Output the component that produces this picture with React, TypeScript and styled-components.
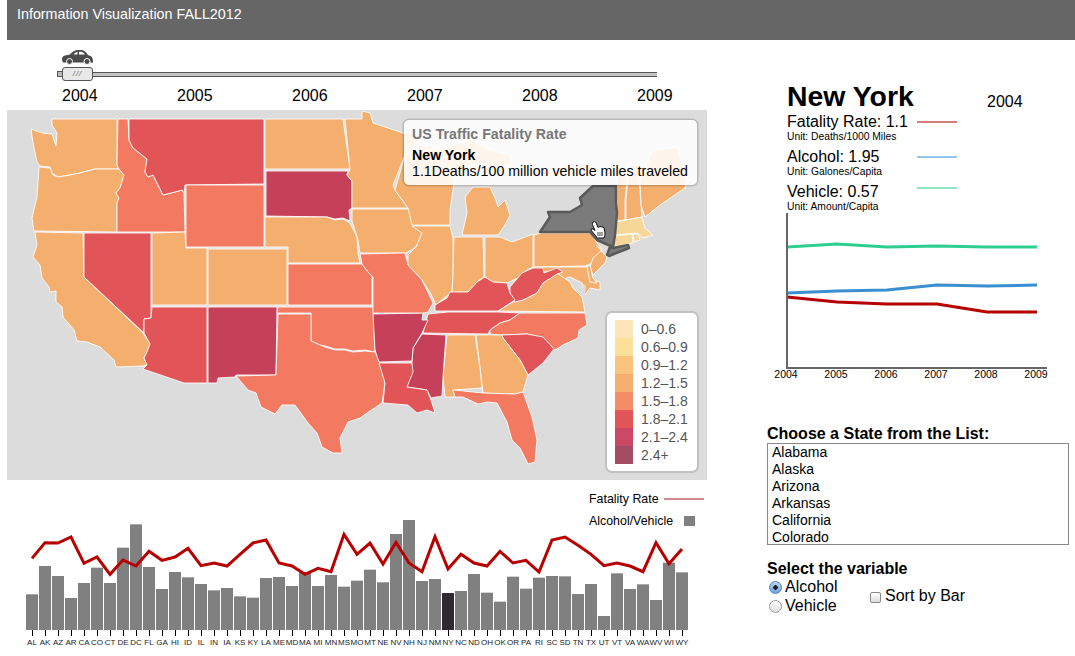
import React from 'react';
import styled, { createGlobalStyle } from 'styled-components';

const ORANGE = '#f4ae6e';
const SALMON = '#f37a60';
const RED = '#e15558';
const CRIMSON = '#c7405a';
const PALE = '#f7d798';

// screen coordinates, the svg viewBox starts at the map's corner
const STATES: { id: string; fill: string; points: string }[] = [
  { id: 'WA', fill: ORANGE, points: '52,119 117,119 117,165 119,169 95,169 80,173 70,175 58,177 52,173 50,167 40,166 37,162 33,143 31,129 42,133 52,134 56,146 57,133 52,125' },
  { id: 'OR', fill: ORANGE, points: '39,167 50,168 53,175 58,177 70,175 80,173 95,169 119,169 124,175 120,188 116,193 119,198 117,203 117,232 34,231 32,218 37,197' },
  { id: 'CA', fill: ORANGE, points: '36,232 83,233 84,277 143,333 150,344 147,352 144,358 147,365 143,366 116,367 114,360 100,347 87,342 77,341 74,330 63,317 62,307 56,302 56,291 50,292 49,287 42,278 40,265 33,257 37,245 35,233' },
  { id: 'NV', fill: RED, points: '84,233 151,233 151,318 144,319 144,333 84,277' },
  { id: 'ID', fill: SALMON, points: '118,119 128,119 129,140 133,148 147,159 145,172 148,177 153,175 163,195 175,192 182,190 184,193 185,232 117,232 117,203 119,198 116,193 120,188 124,175 119,169 117,165' },
  { id: 'MT', fill: RED, points: '129,119 264,119 264,184 185,185 184,193 182,190 175,192 163,195 153,175 148,177 145,172 147,159 133,148 129,140' },
  { id: 'WY', fill: SALMON, points: '186,185 264,185 264,247 186,247' },
  { id: 'UT', fill: ORANGE, points: '152,233 185,232 186,248 207,248 207,305 152,305' },
  { id: 'CO', fill: ORANGE, points: '208,249 287,249 287,305 208,305' },
  { id: 'AZ', fill: RED, points: '152,307 207,307 207,383 184,383 143,369 147,365 144,358 147,352 150,344 144,333 144,319 151,318' },
  { id: 'NM', fill: CRIMSON, points: '208,307 277,307 276,375 236,375 235,377 218,378 217,383 208,383' },
  { id: 'ND', fill: ORANGE, points: '265,119 343,119 350,169 265,169' },
  { id: 'SD', fill: CRIMSON, points: '266,171 348,171 347,175 352,181 352,208 349,210 350,221 343,218 335,219 327,217 266,216' },
  { id: 'NE', fill: ORANGE, points: '265,217 327,217 335,220 343,219 350,223 357,237 358,253 360,263 288,263 288,247 265,247' },
  { id: 'KS', fill: SALMON, points: '288,264 362,264 368,272 372,276 372,305 288,305' },
  { id: 'OK', fill: SALMON, points: '278,307 373,307 375,352 365,350 353,351 345,349 335,349 325,346 314,344 311,340 311,313 277,313' },
  { id: 'TX', fill: SALMON, points: '278,314 311,314 311,341 325,347 335,350 345,350 353,352 365,351 375,352 380,362 385,383 382,403 367,413 360,418 348,422 340,438 342,453 333,453 322,447 317,433 308,423 295,405 282,405 275,414 261,407 256,393 248,390 236,376 276,375' },
  { id: 'MN', fill: ORANGE, points: '345,119 362,119 362,111 370,113 373,123 403,133 425,135 405,155 393,185 395,190 408,208 352,208 352,181 347,175 350,169' },
  { id: 'IA', fill: ORANGE, points: '352,209 410,209 413,222 422,233 416,247 406,253 360,253 358,240 352,221' },
  { id: 'WI', fill: ORANGE, points: '395,190 405,155 430,145 448,160 456,165 453,190 450,210 450,225 412,225 408,208' },
  { id: 'MU', fill: ORANGE, points: '425,150 445,148 470,140 490,150 510,155 510,165 470,165 450,175' },
  { id: 'IL', fill: ORANGE, points: '412,226 450,226 453,238 453,275 452,292 444,298 436,305 431,294 422,280 408,265 408,255 416,247 422,233' },
  { id: 'IN', fill: ORANGE, points: '454,237 483,237 484,277 478,281 473,287 468,292 460,292 452,293 453,275' },
  { id: 'OH', fill: ORANGE, points: '485,237 500,237 512,242 533,234 533,267 527,270 520,277 507,283 493,282 485,277' },
  { id: 'MI', fill: ORANGE, points: '462,235 467,213 465,197 473,187 490,187 496,200 498,207 505,200 510,215 505,225 498,235' },
  { id: 'PA', fill: ORANGE, points: '534,235 541,233 591,233 597,243 602,249 600,255 595,262 585,266 534,267' },
  { id: 'VT', fill: ORANGE, points: '617,170 628,170 625,200 625,220 617,221 617,203' },
  { id: 'NH', fill: ORANGE, points: '629,165 638,165 642,217 626,220 626,200' },
  { id: 'ME', fill: ORANGE, points: '653,150 677,147 687,175 685,188 660,205 645,217 641,205 640,180' },
  { id: 'MA', fill: PALE, points: '615,222 642,217 645,228 653,235 643,238 637,233 614,235' },
  { id: 'CT', fill: PALE, points: '614,236 632,234 633,243 612,247' },
  { id: 'RI', fill: PALE, points: '633,234 638,234 640,240 634,242' },
  { id: 'NJ', fill: ORANGE, points: '596,245 607,257 605,263 593,275 590,267 593,258 602,250' },
  { id: 'MD', fill: ORANGE, points: '533,267 587,267 592,280 600,282 600,290 590,288 585,295 582,283 570,277 560,280 552,272 540,272 533,276' },
  { id: 'DE', fill: ORANGE, points: '587,267 590,265 593,278 597,283 590,282' },
  { id: 'VA', fill: ORANGE, points: '498,311 513,302 523,300 537,293 543,283 557,273 570,282 573,288 582,297 584,307 585,312' },
  { id: 'WV', fill: RED, points: '510,287 522,273 533,268 543,268 544,273 557,268 563,272 557,274 543,283 537,293 523,300 515,302 510,293' },
  { id: 'KY', fill: RED, points: '435,305 447,298 450,292 468,292 477,282 485,277 493,282 507,283 510,293 515,300 498,311 435,311' },
  { id: 'TN', fill: RED, points: '428,314 448,312 498,312 520,313 510,320 500,323 490,330 488,334 423,333' },
  { id: 'NC', fill: SALMON, points: '520,313 585,313 587,325 579,330 578,338 563,345 555,350 543,338 527,334 500,335 490,334 490,330 500,323 510,320' },
  { id: 'SC', fill: RED, points: '502,335 527,334 543,337 554,349 543,363 528,375 520,360 503,338' },
  { id: 'GA', fill: ORANGE, points: '476,335 502,335 503,338 520,360 528,375 523,392 515,394 483,393 480,368' },
  { id: 'AL', fill: ORANGE, points: '447,335 475,335 480,368 482,388 453,390 455,397 445,397 443,377' },
  { id: 'MS', fill: CRIMSON, points: '422,334 446,335 443,377 442,396 431,398 427,390 407,387 412,362 413,348' },
  { id: 'AR', fill: CRIMSON, points: '373,314 423,313 422,320 428,320 422,333 413,348 412,361 379,362 375,350' },
  { id: 'LA', fill: RED, points: '379,363 412,363 413,372 407,387 427,390 431,400 435,413 427,410 417,413 408,405 383,403 385,383' },
  { id: 'FL', fill: SALMON, points: '453,390 483,393 515,394 523,392 532,417 537,440 535,462 528,464 520,448 512,440 507,422 497,403 487,402 478,404 463,397 455,397' },
  { id: 'MO', fill: SALMON, points: '360,254 405,253 408,265 422,280 433,303 428,312 423,313 373,313 373,277 368,272 362,264' },
];

const LEGEND = [
  ['#fee5b7', '0–0.6'],
  ['#fde09a', '0.6–0.9'],
  ['#fcc37e', '0.9–1.2'],
  ['#f4ae6e', '1.2–1.5'],
  ['#f28b66', '1.5–1.8'],
  ['#e15558', '1.8–2.1'],
  ['#cb4866', '2.1–2.4'],
  ['#a44c65', '2.4+'],
];

// top of the bar and point on the line, in 3x zoom units measured off the chart
const BARS: [string, number, number][] = [
  ['AL', 328, 220], ['AK', 243, 173], ['AZ', 273, 174], ['AR', 339, 156], ['CA', 294, 235],
  ['CO', 248, 216], ['CT', 294, 268], ['DE', 188, 225], ['DC', 118, 243], ['FL', 246, 199],
  ['GA', 312, 226], ['HI', 261, 216], ['ID', 277, 190], ['IL', 297, 242], ['IN', 316, 234],
  ['IA', 309, 243], ['KS', 334, 208], ['KY', 338, 174], ['LA', 279, 165], ['ME', 276, 234],
  ['MD', 303, 243], ['MA', 261, 268], ['MI', 303, 250], ['MN', 270, 260], ['MS', 305, 148],
  ['MO', 287, 208], ['MT', 254, 174], ['NE', 292, 237], ['NV', 147, 172], ['NH', 105, 234],
  ['NJ', 288, 260], ['NM', 282, 155], ['NY', 324, 252], ['NC', 318, 208], ['ND', 267, 234],
  ['OH', 323, 243], ['OK', 350, 199], ['OR', 275, 234], ['PA', 311, 226], ['RI', 278, 261],
  ['SC', 273, 165], ['SD', 274, 156], ['TN', 327, 181], ['TX', 297, 208], ['UT', 393, 242],
  ['VT', 265, 234], ['VA', 312, 243], ['WA', 298, 260], ['WV', 345, 173], ['WI', 233, 236],
  ['WY', 262, 192],
];

const YEARS = ['2004', '2005', '2006', '2007', '2008', '2009'];
const TREND_X = [1, 51, 101, 151, 201, 251];
const TRENDS = [
  { color: '#2ecf8e', values: [35, 32, 35, 34, 35, 35] },
  { color: '#3a8fd0', values: [81, 79, 78, 73, 74, 73] },
  { color: '#b80000', values: [85, 90, 92, 92, 100, 100] },
];

const STATE_NAMES = ['Alabama', 'Alaska', 'Arizona', 'Arkansas', 'California', 'Colorado'];

const METRICS = [
  { label: 'Fatality Rate: 1.1', unit: 'Unit: Deaths/1000 Miles', color: '#d67a7a', raise: 0 },
  { label: 'Alcohol: 1.95', unit: 'Unit: Galones/Capita', color: '#93c6ee', raise: 0 },
  { label: 'Vehicle: 0.57', unit: 'Unit: Amount/Capita', color: '#93e6c0', raise: 8 },
];

const App: React.FC = () => {
  const linePoints = BARS.map(([, , point], i) => `${32 + i * 13},${point / 3 + 485}`).join(' ');
  return (
    <>
      <GlobalStyle />
      <Page>
        <Header>Information Visualization FALL2012</Header>
        <Main>
          <LeftColumn>
            <SliderSection>
              <CarIcon viewBox="0 0 31 15">
                <path d="M0 9 Q0 6 3 5.5 L8 4.5 Q11.5 0 16 0 L20 0 Q23 .5 26 5 L29.5 6.5 Q31 8 31 11 L31 12.5 L1 12.5 Q0 11 0 9 Z" fill="#4a4a4a" />
                <path d="M11.5 4.5 Q13 2.2 15.5 1.8 L15.5 4.5 Z M17 1.8 L19.5 1.8 Q21.5 2.5 23 4.5 L17 4.5 Z" fill="#fff" />
                <circle cx="7.5" cy="11.5" r="3" fill="#4a4a4a" stroke="#fff" />
                <circle cx="25" cy="11.5" r="3" fill="#4a4a4a" stroke="#fff" />
              </CarIcon>
              <SliderTrack>
                <SliderCap />
                <SliderRail />
                <SliderHandle>///</SliderHandle>
              </SliderTrack>
              <YearRow>
                {YEARS.map((year) => (
                  <YearLabel key={year}>{year}</YearLabel>
                ))}
              </YearRow>
            </SliderSection>

            <MapPanel>
              <MapSvg viewBox="7 110 700 370">
                {STATES.map((state) => (
                  <StateShape key={state.id} points={state.points} fill={state.fill} />
                ))}
                <BayShape points="583,284 586,286 585,295 582,296" />
                <SelectedState points="540,232 550,217 548,212 570,212 582,205 580,198 593,186 616,186 616,203 617,213 615,235 613,247 597,240 590,232" />
                <SelectedState points="607,255 610,247 613,248 628,245 629,248 609,256" />
                <path
                  d="M593 222 q1.5 -1.5 3 .5 l2 5 q1 -1.5 2 -.5 q1 -1 2 0 q1.5 -.5 2 1 l1 5 q0 3 -1 5 l-7 0 q-1 -3 -3 -4 l-3 -4 q0 -2 2 -1 l2 1.5 l-2.5 -6 q-.5 -1.5 .5 -2.5 Z"
                  fill="#fff"
                  stroke="#111"
                  strokeWidth="1"
                />
                <path d="M598 232 v4 M600 232 v4 M602 232 v4" stroke="#111" strokeWidth=".8" />
              </MapSvg>
              <Tooltip>
                <TooltipTitle>US Traffic Fatality Rate</TooltipTitle>
                <TooltipState>New York</TooltipState>
                <TooltipValue>1.1Deaths/100 million vehicle miles traveled</TooltipValue>
              </Tooltip>
              <MapLegend>
                {LEGEND.map(([color, label]) => (
                  <LegendRow key={label}>
                    <LegendSwatch $color={color} />
                    {label}
                  </LegendRow>
                ))}
              </MapLegend>
            </MapPanel>

            <BarSection>
              <BarChart viewBox="7 485 700 171" width="700" height="171">
                {BARS.map(([code, top], i) => (
                  <g key={code}>
                    <Bar
                      x={26 + i * 13}
                      y={top / 3 + 485}
                      width={12}
                      height={(435 - top) / 3}
                      $selected={code === 'NY'}
                    />
                    <line x1={32.5 + i * 13} x2={32.5 + i * 13} y1={630} y2={636} stroke="#000" />
                    <BarLabel x={32 + i * 13} y={645}>
                      {code}
                    </BarLabel>
                  </g>
                ))}
                <polyline points={linePoints} fill="none" stroke="#b80000" strokeWidth="3" />
              </BarChart>
              <ChartLegend>
                <ChartLegendRow>
                  Fatality Rate
                  <RateMark />
                </ChartLegendRow>
                <ChartLegendRow>
                  Alcohol/Vehicle
                  <BarMark />
                </ChartLegendRow>
              </ChartLegend>
            </BarSection>
          </LeftColumn>

          <RightColumn>
            <DetailPanel>
              <TitleRow>
                <StateTitle>New York</StateTitle>
                <TitleYear>2004</TitleYear>
              </TitleRow>
              {METRICS.map((metric) => (
                <MetricBlock key={metric.label}>
                  <MetricRow>
                    <MetricLabel>{metric.label}</MetricLabel>
                    <MetricLine $color={metric.color} $raise={metric.raise} />
                  </MetricRow>
                  <MetricUnit>{metric.unit}</MetricUnit>
                </MetricBlock>
              ))}
              <TrendChart viewBox="0 0 280 180" width="280" height="180">
                {TRENDS.map((trend) => (
                  <polyline
                    key={trend.color}
                    points={trend.values.map((v, i) => `${TREND_X[i]},${v}`).join(' ')}
                    fill="none"
                    stroke={trend.color}
                    strokeWidth="3"
                  />
                ))}
                <path d="M1 1 V156 H261" fill="none" stroke="#666" strokeWidth="2" />
                {YEARS.map((year, i) => (
                  <TrendLabel key={year} x={i * 50} y={166}>
                    {year}
                  </TrendLabel>
                ))}
              </TrendChart>
            </DetailPanel>

            <ControlHeading>Choose a State from the List:</ControlHeading>
            <StateList>
              {STATE_NAMES.map((name) => (
                <StateOption key={name}>{name}</StateOption>
              ))}
            </StateList>

            <VariableHeading>Select the variable</VariableHeading>
            <VariableRow>
              <RadioGroup>
                <OptionLabel>
                  <Radio type="radio" name="variable" defaultChecked />
                  Alcohol
                </OptionLabel>
                <OptionLabel>
                  <Radio type="radio" name="variable" />
                  Vehicle
                </OptionLabel>
              </RadioGroup>
              <SortLabel>
                <SortBox type="checkbox" />
                Sort by Bar
              </SortLabel>
            </VariableRow>
          </RightColumn>
        </Main>
      </Page>
    </>
  );
};

const GlobalStyle = createGlobalStyle`
  html, body {
    margin: 0;
    background: #fff;
    overflow: hidden;
  }
  body {
    font-family: "Liberation Sans", Arial, sans-serif;
    color: #000;
  }
`;

const Page = styled.div`
  width: 1075px;
  height: 656px;
  padding-left: 7px;
  box-sizing: border-box;
`;

const Header = styled.header`
  height: 40px;
  padding: 6px 0 0 10px;
  box-sizing: border-box;
  background: #666;
  color: #fff;
  font-size: 14.3px;
  line-height: 16px;
`;

const Main = styled.main`
  display: flex;
`;

const LeftColumn = styled.div`
  width: 700px;
  flex: none;
`;

const SliderSection = styled.section`
  height: 70px;
  padding: 10px 0 0 50px;
  box-sizing: border-box;
`;

const CarIcon = styled.svg`
  display: block;
  width: 31px;
  height: 15px;
  margin-left: 5px;
`;

const SliderTrack = styled.div`
  position: relative;
  display: flex;
  align-items: center;
  width: 600px;
  height: 14px;
  margin-top: 2px;
`;

const SliderCap = styled.div`
  width: 4px;
  height: 4px;
  border: 1px solid #555;
  border-right: none;
  background: #bbb;
`;

const SliderRail = styled.div`
  flex: 1;
  height: 3px;
  border-top: 1px solid #555;
  border-bottom: 1px solid #555;
  background: #c4c4c4;
`;

const SliderHandle = styled.div`
  position: absolute;
  left: 5px;
  top: 0;
  width: 29px;
  height: 12px;
  border: 1px solid #555;
  border-radius: 3px;
  background: #e8e8e8;
  color: #666;
  font-size: 8px;
  font-style: italic;
  line-height: 12px;
  letter-spacing: 1px;
  text-align: center;
`;

const YearRow = styled.div`
  display: flex;
  margin: 6px 0 0 5px;
`;

const YearLabel = styled.div`
  flex: none;
  width: 115px;
  font-size: 16px;
  line-height: 18px;
`;

const MapPanel = styled.section`
  position: relative;
  height: 370px;
  background: #dcdcdc;
`;

const MapSvg = styled.svg`
  display: block;
  width: 700px;
  height: 370px;
`;

const StateShape = styled.polygon`
  stroke: #fff;
  stroke-opacity: 0.85;
  stroke-width: 1;
`;

const BayShape = styled.polygon`
  fill: #dcdcdc;
`;

const SelectedState = styled.polygon`
  fill: #7a7a7a;
  stroke: #5a5a5a;
  stroke-width: 2.5;
  stroke-linejoin: round;
`;

const Tooltip = styled.div`
  position: absolute;
  left: 397px;
  top: 10px;
  width: 277px;
  height: 59px;
  padding: 6px 8px 0 8px;
  border-radius: 5px;
  background: rgba(255, 255, 255, 0.88);
  box-shadow: 0 0 0 1.5px rgba(0, 0, 0, 0.16);
  font-size: 14.2px;
  line-height: 16px;
`;

const TooltipTitle = styled.div`
  color: #777;
  font-weight: bold;
  margin-bottom: 5px;
`;

const TooltipState = styled.div`
  font-weight: bold;
`;

const TooltipValue = styled.div`
  white-space: nowrap;
`;

const MapLegend = styled.div`
  position: absolute;
  left: 600px;
  top: 203px;
  width: 74px;
  padding: 7px 8px;
  border-radius: 5px;
  background: #fff;
  box-shadow: 0 0 0 2px rgba(0, 0, 0, 0.12);
`;

const LegendRow = styled.div`
  display: flex;
  align-items: center;
  gap: 8px;
  height: 18px;
  color: #555;
  font-size: 14px;
  white-space: nowrap;
`;

const LegendSwatch = styled.span<{ $color: string }>`
  width: 18px;
  height: 18px;
  background: ${({ $color }) => $color};
`;

const BarSection = styled.section`
  position: relative;
  height: 176px;
  padding-top: 5px;
  box-sizing: border-box;
`;

const BarChart = styled.svg`
  display: block;
`;

const Bar = styled.rect<{ $selected: boolean }>`
  fill: ${({ $selected }) => ($selected ? '#2f2a30' : '#808080')};
`;

const BarLabel = styled.text`
  font-size: 8px;
  fill: #222;
  text-anchor: middle;
`;

const ChartLegend = styled.div`
  position: absolute;
  left: 582px;
  top: 8px;
  width: 115px;
`;

const ChartLegendRow = styled.div`
  display: flex;
  align-items: center;
  justify-content: space-between;
  height: 22px;
  font-size: 12.4px;
`;

const RateMark = styled.span`
  width: 40px;
  height: 2px;
  background: #d48a8a;
`;

const BarMark = styled.span`
  width: 11px;
  height: 10px;
  margin-right: 9px;
  background: #808080;
`;

const RightColumn = styled.div`
  width: 302px;
  margin-left: 60px;
  flex: none;
`;

const DetailPanel = styled.section`
  height: 386px;
  padding: 40px 0 0 20px;
  box-sizing: border-box;
`;

const TitleRow = styled.div`
  display: flex;
  align-items: flex-end;
  height: 33px;
`;

const StateTitle = styled.h1`
  width: 200px;
  margin: 0;
  font-size: 28.4px;
  line-height: 33px;
  font-weight: bold;
`;

const TitleYear = styled.div`
  font-size: 16px;
  line-height: 18px;
  padding-bottom: 2px;
`;

const MetricBlock = styled.div`
  height: 35px;
`;

const MetricRow = styled.div`
  display: flex;
  align-items: center;
  height: 18px;
`;

const MetricLabel = styled.div`
  width: 130px;
  font-size: 16px;
  white-space: nowrap;
`;

const MetricLine = styled.span<{ $color: string; $raise: number }>`
  width: 40px;
  height: 2px;
  margin-bottom: ${({ $raise }) => $raise}px;
  background: ${({ $color }) => $color};
`;

const MetricUnit = styled.div`
  font-size: 10.3px;
  line-height: 12px;
`;

const TrendChart = styled.svg`
  display: block;
  margin: -6px 0 0 -1px;
  overflow: visible;
`;

const TrendLabel = styled.text`
  font-size: 10.5px;
  text-anchor: middle;
`;

const ControlHeading = styled.div`
  font-size: 16px;
  font-weight: bold;
  line-height: 16px;
  white-space: nowrap;
`;

const StateList = styled.ul`
  list-style: none;
  height: 100px;
  margin: 1px 0 0;
  padding: 0 0 0 4px;
  border: 1px solid #888;
  overflow: hidden;
`;

const StateOption = styled.li`
  font-size: 14px;
  line-height: 17px;
`;

const VariableHeading = styled.div`
  margin-top: 16px;
  font-size: 16px;
  font-weight: bold;
  line-height: 16px;
`;

const VariableRow = styled.div`
  display: flex;
  align-items: center;
`;

const RadioGroup = styled.div`
  width: 103px;
`;

const OptionLabel = styled.label`
  display: flex;
  align-items: center;
  height: 19px;
  font-size: 16px;
`;

const Radio = styled.input`
  appearance: none;
  width: 13px;
  height: 13px;
  margin: 1px 3px 0 2px;
  border: 1px solid #9a9a9a;
  border-radius: 50%;
  background: linear-gradient(#fff, #dedede);
  &:checked {
    border-color: #5b83b5;
    background: radial-gradient(circle, #222 0 2px, transparent 2.5px), linear-gradient(#b9d4f2, #6ba2e0);
  }
`;

const SortLabel = styled.label`
  display: flex;
  align-items: center;
  font-size: 16px;
`;

const SortBox = styled.input`
  appearance: none;
  width: 11px;
  height: 11px;
  margin: 2px 4px 0 0;
  border: 1px solid #888;
  border-radius: 2px;
  background: linear-gradient(#fff, #ddd);
`;

export default App;
